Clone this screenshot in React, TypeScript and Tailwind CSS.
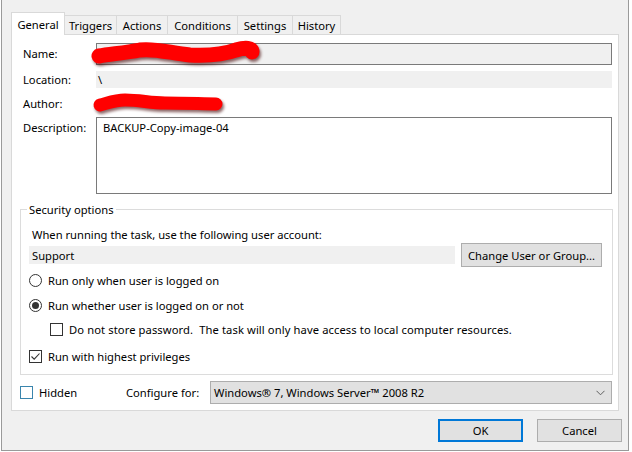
import React from "react";

const font = { fontFamily: '"Noto Sans", "Open Sans", sans-serif' };

function Radio({ checked }: { checked?: boolean }) {
  return (
    <span className="w-[13px] h-[13px] rounded-full border border-[#333333] bg-white flex items-center justify-center shrink-0">
      {checked && <span className="w-[7px] h-[7px] rounded-full bg-[#333333]" />}
    </span>
  );
}

function Check({ checked, blue }: { checked?: boolean; blue?: boolean }) {
  return (
    <span
      className={
        blue
          ? "w-[13px] h-[13px] border border-[#3a85ad] bg-white flex items-center justify-center shrink-0"
          : "w-[13px] h-[13px] border border-[#333333] bg-white flex items-center justify-center shrink-0"
      }
    >
      {checked && (
        <svg width="11" height="11" viewBox="0 0 11 11">
          <path d="M1.5 5.5 L4.2 8.2 L9.5 2.5" fill="none" stroke="#333333" strokeWidth="1.1" />
        </svg>
      )}
    </span>
  );
}

export default function App() {
  const tabs = [
    { label: "Triggers", w: "w-[52px]" },
    { label: "Actions", w: "w-[51px]" },
    { label: "Conditions", w: "w-[70px]" },
    { label: "Settings", w: "w-[55px]" },
    { label: "History", w: "w-[48px]" },
  ];
  const namePath =
    "M99 56 C110 54 124 53 140 50 C155 48 170 53 190 55 C210 56 225 54 236 50 C246 47 252 48 252 52";
  const authorPath =
    "M100 105 C108 103 115 100 125 100 C140 100 150 103 165 103 C185 103 205 104 216 104";
  return (
    <div className="w-[632px] h-[452px] bg-white overflow-hidden relative text-[11.2px] leading-[15px] text-black" style={font}>
      <div className="ml-[1px] w-[628px] h-[451px] bg-[#f0f0f0] border-l border-r border-b border-[#9a9a9a] flex flex-col">
        {/* tabs */}
        <div className="pl-[9px] pt-[12px] flex items-end h-[34px]">
          <div className="w-[54px] h-[23px] mb-[-1px] bg-white border-l border-t border-r border-[#d9d9d9] flex items-center justify-center relative z-10">
            General
          </div>
          {tabs.map((t) => (
            <div
              key={t.label}
              className={`${t.w} h-[19px] border-t border-r border-[#d9d9d9] bg-[#f0f0f0] flex items-center justify-center`}
            >
              {t.label}
            </div>
          ))}
        </div>

        {/* panel */}
        <div className="ml-[9px] w-[608px] h-[377px] bg-white border border-[#d9d9d9] pl-[8px] pr-[5px] pt-[8px] flex flex-col">
          <div className="flex items-center h-[22px]">
            <div className="ml-[3px] w-[73px] mb-[2px]">Name:</div>
            <div className="w-[516px] h-[22px] border border-[#7a7a7a] bg-[#f0f0f0]" />
          </div>
          <div className="flex items-center h-[17px] mt-[6px]">
            <div className="ml-[3px] w-[73px]">Location:</div>
            <div className="w-[516px] h-[17px] bg-[#f0f0f0] pl-[2px] flex items-center">\</div>
          </div>
          <div className="flex items-center h-[22px] mt-[4px]">
            <div className="ml-[3px] w-[73px]">Author:</div>
            <div className="w-[516px] h-[22px]" />
          </div>
          <div className="flex items-start h-[77px] mt-[3px]">
            <div className="ml-[3px] w-[73px] mt-[3px]">Description:</div>
            <div className="w-[516px] h-[77px] border border-[#7a7a7a] bg-white pl-[6px] pt-[2px]">
              BACKUP-Copy-image-04
            </div>
          </div>

          <fieldset className="mt-[8px] h-[173px] border border-[#dcdcdc] pl-[8px] pr-[9px] flex flex-col">
            <legend className="ml-[-2px] px-[2px] leading-[15px]">Security options</legend>
            <div className="pt-[10px] ml-[3px]">When running the task, use the following user account:</div>
            <div className="mt-[1px] h-[24px] flex items-center gap-[6px]">
              <div className="w-[426px] h-[18px] bg-[#f0f0f0] pl-[3px] flex items-center">Support</div>
              <div className="w-[141px] h-[24px] bg-[#e1e1e1] border border-[#adadad] flex items-center justify-center">
                Change User or Group...
              </div>
            </div>
            <div className="mt-[3px] h-[20px] flex items-center gap-[6px]">
              <Radio />
              <span>Run only when user is logged on</span>
            </div>
            <div className="mt-[5px] h-[20px] flex items-center gap-[6px]">
              <Radio checked />
              <span>Run whether user is logged on or not</span>
            </div>
            <div className="mt-[4px] h-[20px] flex items-center gap-[6px] ml-[21px]">
              <Check />
              <span className="whitespace-pre tracking-[0.1px]">
                Do not store password.  The task will only have access to local computer resources.
              </span>
            </div>
            <div className="mt-[7px] h-[20px] flex items-center gap-[6px]">
              <Check checked />
              <span>Run with highest privileges</span>
            </div>
          </fieldset>

          <div className="mt-[6px] h-[23px] flex items-center">
            <Check blue />
            <span className="ml-[6px] w-[87px] mb-[1px]">Hidden</span>
            <span className="w-[84px] mb-[1px]">Configure for:</span>
            <div className="w-[402px] h-[23px] bg-[#e1e1e1] border border-[#adadad] pl-[3px] pr-[6px] flex items-center justify-between">
              <span className="mb-[1px]">Windows® 7, Windows Server™ 2008 R2</span>
              <svg width="9" height="6" viewBox="0 0 9 6">
                <path d="M0.5 0.8 L4.5 4.8 L8.5 0.8" fill="none" stroke="#606060" strokeWidth="1" />
              </svg>
            </div>
          </div>
        </div>

        {/* buttons */}
        <div className="mt-[8px] pr-[6px] flex justify-end gap-[14px]">
          <div className="w-[85px] h-[23px] bg-[#e1e1e1] border-2 border-[#0078d7] flex items-center justify-center">OK</div>
          <div className="w-[85px] h-[23px] bg-[#e1e1e1] border border-[#adadad] flex items-center justify-center">Cancel</div>
        </div>
      </div>

      {/* redaction scribbles */}
      <svg className="absolute left-0 top-0 pointer-events-none" width="632" height="452" viewBox="0 0 632 452">
        <defs>
          <filter id="sh" x="-20%" y="-80%" width="140%" height="260%">
            <feGaussianBlur stdDeviation="1.8" />
          </filter>
        </defs>
        <g transform="translate(1.5,2.5)" filter="url(#sh)" opacity="0.6">
          <path d={namePath} fill="none" stroke="#400000" strokeWidth="15" strokeLinecap="round" />
          <path d={authorPath} fill="none" stroke="#400000" strokeWidth="13" strokeLinecap="round" />
        </g>
        <path d={namePath} fill="none" stroke="#ff0000" strokeWidth="15" strokeLinecap="round" />
        <path d={authorPath} fill="none" stroke="#ff0000" strokeWidth="13" strokeLinecap="round" />
      </svg>
    </div>
  );
}
